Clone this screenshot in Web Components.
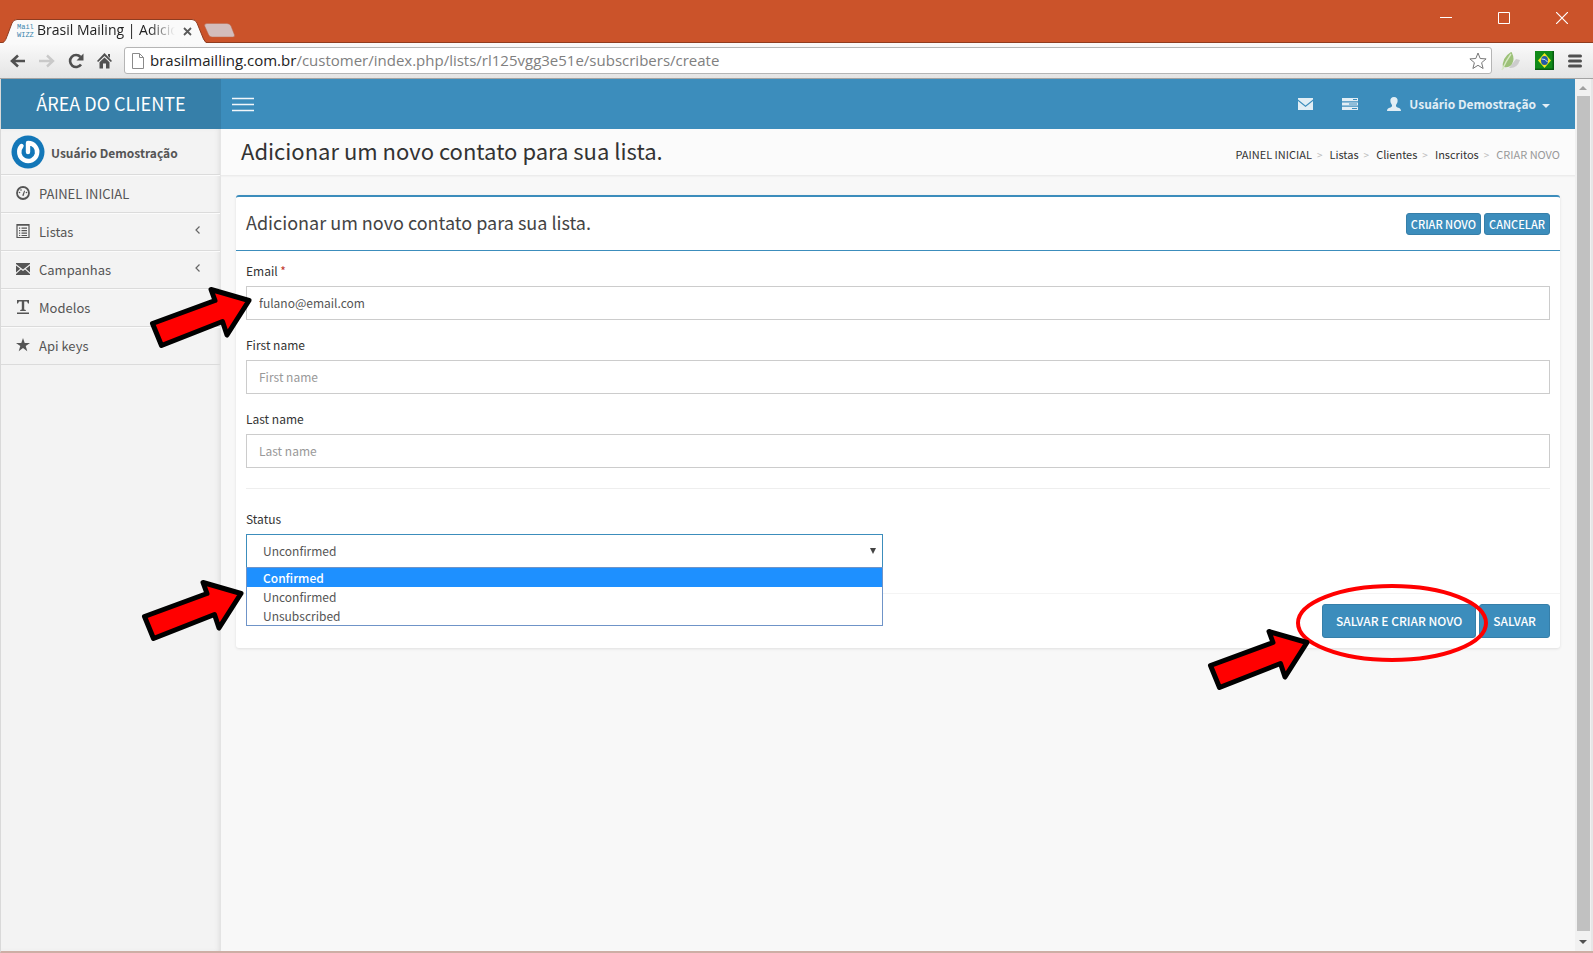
<!DOCTYPE html>
<html lang="pt-BR">
<head>
<meta charset="utf-8">
<title>Brasil Mailing | Adicionar um novo contato para sua lista.</title>
<style>
  html, body { margin: 0; }
  body {
    display: flex; flex-direction: column; min-height: 100vh;
    font-family: "Noto Sans CJK SC", "Open Sans", sans-serif;
    font-size: 12px; line-height: 20px; font-weight: 400; color: #333;
  }
</style>
</head>
<body>
<browser-window>
  <client-app>
    <app-header slot="header"></app-header>
    <app-sidebar slot="sidebar">
      <nav-item icon="dashboard">PAINEL INICIAL</nav-item>
      <nav-item icon="list" expandable>Listas</nav-item>
      <nav-item icon="mail" expandable>Campanhas</nav-item>
      <nav-item icon="type">Modelos</nav-item>
      <nav-item icon="star">Api keys</nav-item>
    </app-sidebar>
    <page-heading>Adicionar um novo contato para sua lista.</page-heading>
    <form-box heading="Adicionar um novo contato para sua lista.">
      <action-button slot="tools" size="small">CRIAR NOVO</action-button>
      <action-button slot="tools" size="small">CANCELAR</action-button>
      <text-field label="Email" placeholder="Email" value="fulano@email.com" required>
        <pointer-arrow></pointer-arrow>
      </text-field>
      <text-field label="First name" placeholder="First name"></text-field>
      <text-field label="Last name" placeholder="Last name"></text-field>
      <status-field slot="status"><pointer-arrow></pointer-arrow></status-field>
      <action-button slot="footer" circled>SALVAR E CRIAR NOVO</action-button>
      <action-button slot="footer">SALVAR</action-button>
    </form-box>
  </client-app>
</browser-window>

<script>
const define = (name, html, setup) => {
  const template = document.createElement('template');
  template.innerHTML = '<style>*{box-sizing:border-box}</style>' + html;
  customElements.define(name, class extends HTMLElement {
    constructor() {
      super();
      this.attachShadow({ mode: 'open' }).append(template.content.cloneNode(true));
    }
    connectedCallback() { if (setup) setup(this, this.shadowRoot); }
  });
};

define('browser-window', `
<style>
  :host { display: flex; flex-direction: column; flex: 1; }
  .body { display: flex; flex: 1; background: #f8f8f8; border-left: 1px solid #d9d9d9; border-bottom: 2px solid #cdaea5; }
  ::slotted(*) { flex: 1; min-width: 0; }
</style>
<browser-tabs></browser-tabs>
<browser-toolbar></browser-toolbar>
<div class="body"><slot></slot><scroll-rail></scroll-rail></div>`);

define('browser-tabs', `
<style>
  :host { display: flex; height: 43px; background: #cb532a; border-bottom: 1px solid #8f3c20; font: 14px/20px "Open Sans", sans-serif; color: #222; }
  .tab { position: relative; display: flex; align-items: center; width: 208px; height: 24px; margin-top: 19px; padding-left: 17px; }
  .shape { position: absolute; left: 0; top: 0; }
  .fav { position: relative; display: grid; width: 16px; margin-right: 4px; font: 7px/8px "Liberation Mono", monospace; color: #3b86ad; }
  .title { position: relative; width: 138px; padding-bottom: 2px; white-space: nowrap;
    -webkit-mask-image: linear-gradient(90deg, #000 112px, transparent 138px); mask-image: linear-gradient(90deg, #000 112px, transparent 138px); }
  button { position: relative; background: none; border: 0; padding: 0; display: flex; }
  .close { margin-left: 8px; }
  .new { align-self: flex-end; margin: 0 auto 4px -4px; }
  .win { display: flex; gap: 46px; padding: 12px 25px 0 0; }
  .win button { height: 12px; }
</style>
<div class="tab">
  <svg class="shape" width="209" height="25" viewBox="0 0 209 25"><path d="M0 24.500C5 24 6 20 7.500 16L12 4Q13.500.5 17 .5H192Q195.500.5 197 4L203.500 20Q205 24 209 24.500Z" fill="#fafafa" stroke="#8f3c20"/><path d="M0 24h209v1H0z" fill="#fafafa"/></svg>
  <span class="fav"><span>Mail</span><span>WIZZ</span></span>
  <span class="title">Brasil Mailing | Adicio</span>
  <button class="close" aria-label="Fechar guia"><svg width="9" height="9"><path d="M1 1l7 7M8 1l-7 7" stroke="#5a5a5a" stroke-width="1.800"/></svg></button>
</div>
<button class="new" aria-label="Nova guia"><svg width="31" height="15"><path d="M3 .5h20q3 0 4 2.500l3.500 9q.5 2-1.500 2H8q-2.500 0-3.500-2.500L.7 3Q0 .5 3 .5z" fill="#d3bdbc" stroke="#b9694f" stroke-width=".5"/></svg></button>
<div class="win">
  <button aria-label="Minimizar"><svg width="12" height="12"><path d="M0 5.500h12" stroke="#fff"/></svg></button>
  <button aria-label="Maximizar"><svg width="12" height="12"><path d="M.5.5h11v11H.5z" fill="none" stroke="#fff"/></svg></button>
  <button aria-label="Fechar"><svg width="12" height="12"><path d="M0 0l12 12M12 0L0 12" stroke="#fff" stroke-width="1.200"/></svg></button>
</div>`);

define('browser-toolbar', `
<style>
  :host { display: flex; align-items: center; gap: 12px; height: 36px; padding: 0 11px 0 9px; background: linear-gradient(#fafafa, #e4e4e4); border-bottom: 1px solid #a3a3a3; font: 15px/22px "Open Sans", sans-serif; }
  button { background: none; border: 0; padding: 0; display: flex; }
  .nav { display: flex; align-items: center; gap: 13px; }
  .url { flex: 1; display: flex; align-items: center; height: 27px; border: 1px solid #b5b5b5; border-radius: 3px; background: #fff; padding: 0 4px 0 7px; }
  .text { flex: 1; margin-left: 6px; padding-bottom: 2px; color: #808080; white-space: nowrap; outline: 0; }
  b { font-weight: 400; color: #222; }
  .ext { display: flex; align-items: center; gap: 14px; margin-left: -3px; }
</style>
<div class="nav">
  <button aria-label="Voltar"><svg width="17" height="16" viewBox="0 0 17 16"><path d="M9 2.500L3 8l6 5.500M3 8h13" fill="none" stroke="#505050" stroke-width="2.600"/></svg></button>
  <button aria-label="Avançar"><svg width="16" height="16" viewBox="0 0 16 16"><path d="M8 2.500L14 8l-6 5.500M14 8H0" fill="none" stroke="#c9c9c9" stroke-width="2.400"/></svg></button>
  <button aria-label="Recarregar"><svg width="16" height="16" viewBox="0 0 16 16"><path d="M13 11.500A6 6 0 1 1 12.500 4" fill="none" stroke="#505050" stroke-width="2.600"/><path d="M15.500.5v7H8.500z" fill="#505050"/></svg></button>
  <button aria-label="Página inicial"><svg width="15" height="16" viewBox="0 0 15 16"><path d="M7.500 0L15 8l-1.200 1L7.500 3 1.200 9 0 8zM11 1h2v4l-2-2zM7.500 4.500l5 4.800V15.500H9V10.500H6v5H2.500V9.300z" fill="#505050"/></svg></button>
</div>
<div class="url">
  <svg width="12" height="16" viewBox="0 0 12 16"><path d="M.5.5h7l4 4v11H.5zM7.500.5v4h4" fill="#fff" stroke="#8a8a8a"/></svg>
  <div class="text" role="textbox" contenteditable="true" spellcheck="false" aria-label="Endereço"><b>brasilmailling.com.br</b>/customer/index.php/lists/rl125vgg3e51e/subscribers/create</div>
  <svg width="18" height="18" viewBox="0 0 18 18"><path d="M9 1l2.200 5.500 5.900.4-4.500 3.800 1.500 5.800L9 13.300 3.900 16.500l1.500-5.800L.9 6.900l5.900-.4z" fill="#fff" stroke="#777" stroke-linejoin="round"/></svg>
</div>
<div class="ext">
  <button aria-label="Folha"><svg width="20" height="20" viewBox="0 0 20 20"><path d="M8 17q8 1 11-8l-4-1z" fill="#ccc"/><path d="M2 18Q0 7 10 1q1 0 1 1 3 6 0 11-3 4-8 3z" fill="#9cc178"/><path d="M1 19Q5 10 10 3" fill="none" stroke="#d7e9c3" stroke-width="1.300"/></svg></button>
  <button aria-label="Brasil"><svg width="19" height="19" viewBox="0 0 19 19"><path d="M0 0h19v19H0z" fill="#108a18"/><path d="M0 17.500h19V19H0zM17.500 0H19v19h-1.500z" fill="#075c10"/><path d="M9.500 2L16 9.500 9.500 17 3 9.500z" fill="#f0e621"/><ellipse cx="9.500" cy="9.500" rx="3.500" ry="4.500" fill="#2459a6"/><path d="M6.500 8q4-.5 6 3" fill="none" stroke="#cfe3f5"/></svg></button>
  <button aria-label="Menu"><svg width="14" height="14" viewBox="0 0 14 14"><path d="M1.500 2h11M1.500 7h11M1.500 12h11" stroke="#505050" stroke-width="3" stroke-linecap="round"/></svg></button>
</div>`);

define('scroll-rail', `
<style>
  :host { display: flex; flex-direction: column; align-items: center; width: 18px; background: #f1f1f1; border-right: 2px solid #e6e6e6; }
  svg { display: block; margin: 7px 0 6px; }
  .thumb { flex: 1; width: 13px; background: #c1c1c1; }
  .down { margin: 9px 0 7px; }
</style>
<svg width="8" height="4"><path d="M0 4l4-4 4 4z" fill="#a0a0a0"/></svg>
<div class="thumb"></div>
<svg class="down" width="8" height="4"><path d="M0 0h8L4 4z" fill="#505050"/></svg>`);

define('client-app', `
<style>
  :host { display: flex; flex-direction: column; }
  .cols { flex: 1; display: grid; grid-template-columns: 220px minmax(0, 1fr); }
  slot[name=sidebar] { display: grid; }
  main { position: relative; z-index: 1; }
</style>
<slot name="header"></slot>
<div class="cols"><slot name="sidebar"></slot><main><slot></slot></main></div>`);

define('app-header', `
<style>
  :host { display: flex; height: 50px; background: #3c8dbc; color: #fff; }
  a { color: inherit; text-decoration: none; }
  .brand { width: 220px; display: flex; align-items: center; justify-content: center; padding-bottom: 2px; background: #367fa9; font-size: 18px; }
  button { background: none; border: 0; padding: 0; font: inherit; color: inherit; display: flex; align-items: center; }
  .menu { margin-left: 11px; }
  nav { margin-left: auto; display: flex; align-items: center; gap: 29px; padding-right: 25px; color: #e2eef5; fill: #e2eef5; }
  .user { font-weight: 700; gap: 8px; }
  .user svg + span + svg { margin: 4px 0 0 -2px; }
</style>
<a class="brand" href="#">ÁREA DO CLIENTE</a>
<button class="menu" aria-label="Alternar menu"><svg width="22" height="15"><path d="M0 1.500h22M0 7.500h22M0 13.500h22" stroke="#f2f7fa" stroke-width="1.600"/></svg></button>
<nav>
  <button aria-label="Mensagens"><svg width="15" height="12" viewBox="0 0 15 12"><path d="M0 0h15v1.500L7.500 7.500 0 1.500z"/><path d="M0 3l7.500 6L15 3v9H0z"/></svg></button>
  <button aria-label="Tarefas"><svg width="16" height="12" viewBox="0 0 16 12"><path fill-rule="evenodd" d="M0 0h16v3.200H0zM11 1v1h4V1zM0 4.400h16v3.200H0zM7 5.400v1h8v-1zM0 8.800h16V12H0zM10 9.900v1h5v-1z"/></svg></button>
  <button class="user"><svg width="14" height="14" viewBox="0 0 14 14"><path d="M7 0c2.500 0 4 1.700 3.600 4.300C10.400 6 9.600 7 9 8c-.2 1.500.3 2 1.500 2.400 2.500.7 3.500 1.300 3.500 3.600H0c0-2.300 1-2.900 3.500-3.600C4.700 10 5.200 9.500 5 8c-.6-1-1.400-2-1.600-3.700C3 1.700 4.500 0 7 0z"/></svg><span>Usuário Demostração</span><svg width="8" height="4"><path d="M0 0h8L4 4z"/></svg></button>
</nav>`);

define('app-sidebar', `
<style>
  :host { display: block; background: #f3f3f3; border-right: 1px solid #e4e4e4; box-shadow: inset -3px 0 6px -4px #ccc; color: #555; }
  .who { display: flex; align-items: center; gap: 6px; height: 46px; padding: 0 0 0 10px; border-bottom: 1px solid #dbdbdb; font-weight: 700; }
  svg { flex: none; }
  .who span { padding-top: 3px; }
</style>
<div class="who"><svg width="34" height="34" viewBox="0 0 34 34"><circle cx="17" cy="17" r="16.500" fill="#1377b8"/><path d="M17 17V8A9 9 0 1 1 10.500 11" fill="none" stroke="#fff" stroke-width="4.400" stroke-linecap="round" stroke-linejoin="round"/></svg><span>Usuário Demostração</span></div>
<slot></slot>`);

const NAV_ICONS = {
  dashboard: '<circle cx="7" cy="7" r="6" fill="none" stroke="#555" stroke-width="1.800"/><path d="M6.200 9.500l2-5 .8.400-1.400 5.200z"/><circle cx="3.500" cy="6.500" r=".8"/><circle cx="5" cy="4" r=".8"/><circle cx="10.500" cy="6.500" r=".8"/>',
  list: '<path d="M1 .5h12v13H1z" fill="none" stroke="#555" stroke-width="1.200"/><path d="M1 .2h12v1.600H1zM3 3.500h1.200v1.200H3zM5.500 3.500H11v1.200H5.500zM3 6h1.200v1.200H3zM5.500 6H11v1.200H5.500zM3 8.500h1.200v1.200H3zM5.500 8.500H11v1.200H5.500zM3 11h1.200v1H3zM5.500 11H11v1H5.500z"/>',
  mail: '<path d="M0 1h14v1L7 7.500 0 2zM0 3.500l4.200 3.200L0 10.500zM14 3.500v7L9.800 6.700zM5 7.500l2 1.500 2-1.500 5 4.500v1H0v-1z"/>',
  type: '<path d="M1 0h12v3.500h-1L11 1.500H8.200V9.500l1.600.6v.9H4.200v-.9l1.600-.6v-8H3L2 3.500H1zM1 12.500h12V14H1z"/>',
  star: '<path d="M7 0l1.700 5H14L9.700 8.100l1.600 5.200L7 10.100l-4.300 3.200 1.600-5.200L0 5h5.300z"/>'
};
define('nav-item', `
<style>
  :host { display: block; font-size: 13px; border-top: 1px solid #fbfbfb; border-bottom: 1px solid #dbdbdb; }
  a { display: flex; align-items: center; height: 36px; padding: 0 20px 0 15px; color: #555; text-decoration: none; }
  svg { fill: #555; margin: 0 9px 3px 0; flex: none; }
  .chev { display: none; margin: 0 0 5px auto; }
  :host([expandable]) .chev { display: block; }
</style>
<a href="#"><svg class="icon" width="14" height="14" viewBox="0 0 14 14"></svg><slot></slot><svg class="chev" width="5" height="8"><path d="M4.500.5L1 4l3.500 3.500" fill="none" stroke="#666" stroke-width="1.200"/></svg></a>`,
(el, root) => { root.querySelector('.icon').innerHTML = NAV_ICONS[el.getAttribute('icon')]; });

define('page-heading', `
<style>
  :host { display: flex; justify-content: space-between; height: 46px; padding: 0 15px 0 20px; background: #fbfbfb; border-bottom: 1px solid #ececec; box-shadow: 0 1px 1px #f2f2f2; }
  h1 { margin: 0; font-size: 22px; font-weight: 400; line-height: 42px; }
  ol { display: flex; gap: 5px; margin: 0; padding: 15px 0 0; list-style: none; font-size: 11px; color: #999; }
  li + li::before { content: ">"; color: #bbb; margin-right: 7px; font-size: 10px; }
  a { color: #333; text-decoration: none; }
</style>
<h1><slot></slot></h1>
<ol><li><a href="#">PAINEL INICIAL</a></li><li><a href="#">Listas</a></li><li><a href="#">Clientes</a></li><li><a href="#">Inscritos</a></li><li>CRIAR NOVO</li></ol>`);

define('form-box', `
<style>
  :host { display: block; margin: 19px 15px; background: #fff; border-top: 2px solid #3c8dbc; border-radius: 3px; box-shadow: 0 1px 3px rgba(0,0,0,.1); }
  header { display: flex; align-items: flex-start; justify-content: space-between; height: 54px; padding: 0 10px; border-bottom: 1px solid #3c8dbc; color: #444; }
  h2 { margin: 0; font-size: 18px; font-weight: 400; line-height: 50px; }
  .row { display: flex; gap: 3px; padding-top: 16px; }
  .body { padding: 10px; }
  hr { border: 0; border-top: 1px solid #eee; margin: 20px 0; }
  .cols { display: grid; grid-template-columns: 1fr 1fr; gap: 30px; }
  footer { display: flex; justify-content: flex-end; gap: 3px; padding: 10px; border-top: 1px solid #f4f4f4; }
</style>
<header><h2></h2><div class="row"><slot name="tools"></slot></div></header>
<div class="body"><slot></slot><hr><div class="cols"><slot name="status"></slot></div></div>
<footer><slot name="footer"></slot></footer>`,
(el, root) => { root.querySelector('h2').textContent = el.getAttribute('heading'); });

define('text-field', `
<style>
  :host { display: block; margin-bottom: 15px; }
  label { display: block; height: 20px; margin-bottom: 5px; }
  i { font-style: normal; color: #c0392b; }
  .wrap { position: relative; }
  input { display: block; width: 100%; height: 34px; padding: 0 12px 2px; border: 1px solid #ccc; border-radius: 0; background: #fff; font: inherit; color: #555; outline: 0; }
  input::placeholder { color: #999; opacity: 1; }
  ::slotted(pointer-arrow) { position: absolute; left: -98px; top: -1px; }
</style>
<label for="field"><span></span> <i></i></label>
<div class="wrap"><input id="field"><slot></slot></div>`,
(el, root) => {
  root.querySelector('span').textContent = el.getAttribute('label');
  if (el.hasAttribute('required')) root.querySelector('i').textContent = '*';
  const input = root.querySelector('input');
  input.placeholder = el.getAttribute('placeholder');
  input.value = el.getAttribute('value') || '';
});

define('status-field', `
<style>
  :host { display: block; margin-bottom: 15px; }
  label { display: block; height: 20px; margin-bottom: 5px; }
  .wrap { position: relative; }
  select { display: block; appearance: none; width: 100%; height: 34px; padding: 0 16px; border: 1px solid #3c8dbc; border-radius: 0; background: #fff; font: inherit; color: #555; outline: 0; }
  .mark { position: absolute; right: 7px; top: 14px; }
  ul { position: absolute; left: 0; right: 0; top: 33px; margin: 0; padding: 0; list-style: none; background: #fff; border: 1px solid #6f94c8; color: #555; }
  li { padding: 0 16px; line-height: 19px; }
  .on { background: #1e90ff; color: #fff; font-weight: 500; }
  ::slotted(pointer-arrow) { position: absolute; left: -106px; top: 44px; }
</style>
<label for="status">Status</label>
<div class="wrap">
  <select id="status"><option>Confirmed</option><option selected>Unconfirmed</option><option>Unsubscribed</option></select>
  <svg class="mark" width="6" height="6"><path d="M0 0h6L3 6z" fill="#444"/></svg>
  <ul role="listbox" aria-label="Status"><li class="on" role="option">Confirmed</li><li role="option">Unconfirmed</li><li role="option">Unsubscribed</li></ul>
  <slot></slot>
</div>`);

define('action-button', `
<style>
  :host { display: block; position: relative; font-weight: 500; }
  :host([circled]) { z-index: 1; }
  button { display: block; height: 34px; padding: 0 13px; border: 1px solid #367fa9; border-radius: 3px; background: #3c8dbc; color: #fff; font: inherit; white-space: nowrap; }
  :host([size=small]) button { height: 22px; padding: 0 4px 2px; font-size: 11px; }
  .ring, pointer-arrow { display: none; position: absolute; pointer-events: none; }
  .ring { left: -26px; top: -20px; }
  pointer-arrow { left: -116px; top: 23px; }
  :host([circled]) .ring, :host([circled]) pointer-arrow { display: block; }
</style>
<button type="button"><slot></slot></button>
<svg class="ring" width="192" height="78"><ellipse cx="96" cy="39" rx="94" ry="37" fill="none" stroke="#f00" stroke-width="4"/></svg>
<pointer-arrow></pointer-arrow>`);

define('pointer-arrow', `
<style>:host { display: block; pointer-events: none; } svg { display: block; }</style>
<svg width="105" height="65" viewBox="0 0 105 65"><path d="M4.500 38.500L67 15.500 63 4.500 101 15.500 79 50 74.500 36.500 13.500 60.500z" fill="#f00" stroke="#000" stroke-width="5" stroke-linejoin="round"/></svg>`);
</script>
</body>
</html>
